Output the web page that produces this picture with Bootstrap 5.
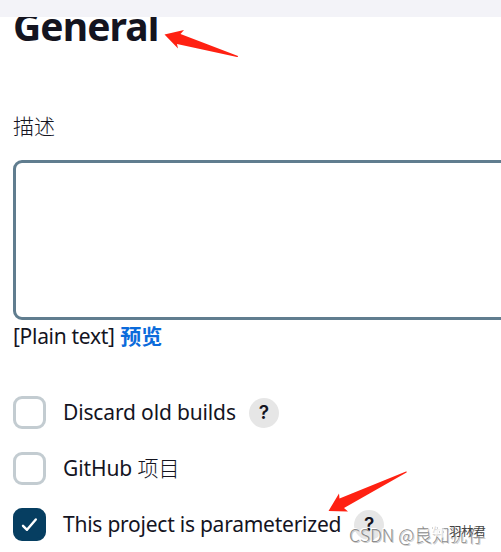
<!DOCTYPE html>
<html lang="zh-CN">
<head>
<meta charset="utf-8">
<meta name="viewport" content="width=device-width, initial-scale=1">
<title>General</title>
<link href="https://cdn.jsdelivr.net/npm/bootstrap@5.3.0/dist/css/bootstrap.min.css" rel="stylesheet">
<style>
body{width:501px;height:552px;font-family:"Noto Sans","Noto Sans CJK SC",sans-serif;font-size:21px;line-height:30px;color:#14141f;background:#fff}
.top-strip{height:17px;background:#f3f3f8}
.heading-clip{height:93px;padding-left:13px}
.heading-clip h1{font-size:39px;line-height:48px;font-weight:700;margin:-15px 0 0;letter-spacing:-.9px}
.cjk{font-family:"Noto Sans CJK SC",sans-serif;font-weight:300}
.desc-label{height:50px;padding-left:13px}
.desc-box{height:160px;width:520px;margin-left:13px;border:3px solid #607d8f;border-radius:9px;resize:none;padding:8px;box-shadow:none!important}
.format-line{height:76px;padding-left:13px}
.format-line .plain{letter-spacing:-.3px}
.format-line a{color:#0b6bdb;font-weight:700;font-family:"Noto Sans CJK SC",sans-serif}
.option{height:33px;margin:0 0 23px 13px}
.option label{margin-top:-2px}
.option .form-check-input{width:33px;height:33px;margin:0;border:3px solid #c3ccd1;border-radius:9px;box-shadow:none;background-color:#fff}
.option .form-check-input:checked{border-color:#063e61;background-color:#063e61;background-image:none}
.box-wrap{width:33px;height:33px;margin-right:17px}
.label-discard{letter-spacing:-.15px}
.label-github{letter-spacing:-.1px}
.label-param{letter-spacing:-.24px}
.tick{left:0;top:0;pointer-events:none}
.help{width:30px;height:30px;background:#e6e6e6;font:600 19px/30px Inter,sans-serif;margin-left:13px}
.arrows{left:0;top:0;pointer-events:none}
.watermark{left:349px;top:519px;font:300 17.7px/30px "Noto Sans CJK SC",sans-serif;color:#8c8c8c;text-shadow:-1px -1px 0 #fff,1px 1px 0 #ccc}
.chat-mark{left:427px;top:521px}
.account{left:449px;top:517px;font:12.300px/28px "Noto Sans CJK SC",sans-serif;color:#444;text-shadow:-1px -1px 0 #fff}
</style>
<script src="https://cdn.jsdelivr.net/npm/bootstrap@5.3.0/dist/js/bootstrap.bundle.min.js"></script>
</head>
<body class="position-relative overflow-hidden m-0">
<div class="top-strip"></div>
<div class="heading-clip overflow-hidden"><h1>General</h1></div>
<main class="overflow-hidden">
<div class="desc-label cjk">描述</div>
<textarea class="form-control desc-box" aria-label="描述"></textarea>
<div class="format-line"><span class="plain">[Plain text]</span> <a href="#" class="text-decoration-none">预览</a></div>
<div class="option d-flex align-items-center">
<div class="box-wrap"><input class="form-check-input" type="checkbox" id="o1"></div>
<label for="o1" class="label-discard">Discard old builds</label><span class="help rounded-circle text-center">?</span>
</div>
<div class="option d-flex align-items-center">
<div class="box-wrap"><input class="form-check-input" type="checkbox" id="o2"></div>
<label for="o2" class="label-github">GitHub <span class="cjk">项目</span></label>
</div>
<div class="option d-flex align-items-center">
<div class="box-wrap position-relative"><input class="form-check-input" type="checkbox" id="o3" checked>
<svg class="tick position-absolute" width="33" height="33" fill="none" stroke="#fff" stroke-width="2.4" stroke-linecap="round" stroke-linejoin="round"><path d="M10 17.800l4 4 8.800-10.300"/></svg></div>
<label for="o3" class="label-param">This project is parameterized</label><span class="help rounded-circle text-center">?</span>
</div>
</main>
<svg class="arrows position-absolute" width="501" height="552" fill="#ff2112"><path d="M164.500 34.500L184 30l-3.500 4L238 56q.5 1-1 1L177 44l1 4.500z"/><path d="M328.500 511L339 493.500l.5 5L406 471.500q1.500 0 .5 1L344 508l4 3.500z"/></svg>
<div class="watermark position-absolute text-nowrap">CSDN @良知犹存</div>
<svg class="chat-mark position-absolute" width="22" height="20" fill="#fff" fill-opacity=".65"><ellipse cx="8" cy="8" rx="7" ry="6"/><ellipse cx="14" cy="12" rx="6" ry="5"/><path d="M5 7h1M10 7h1M12 11h1M16 11h1" stroke="#aaa"/></svg>
<div class="account position-absolute text-nowrap">羽林君</div>
</body>
</html>
